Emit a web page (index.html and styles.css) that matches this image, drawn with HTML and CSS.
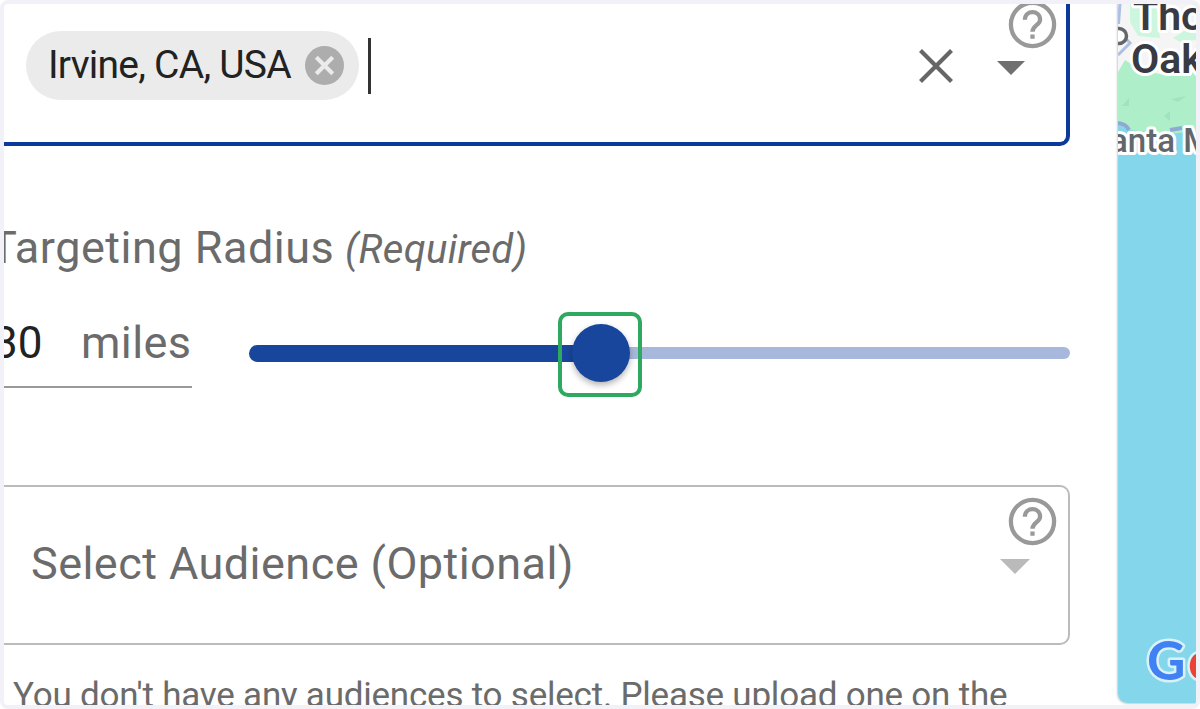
FILE: index.html
```html
<!DOCTYPE html>
<html lang="en">
<head>
    <meta charset="UTF-8">
    <meta name="viewport" content="width=device-width, initial-scale=1.0">
    <title>Targeting Radius</title>
    <link rel="stylesheet" href="styles.css">
</head>
<body>

    <div class="frame">
        <div class="form">
            <!-- Location -->
            <div class="field location-field">
                <div class="chip">
                    <span class="chip-label">Irvine, CA, USA</span>
                    <svg class="chip-remove" viewBox="0 0 38 38">
                        <circle cx="19" cy="19" r="19" fill="#adadad"/>
                        <path d="M11 11L27 27M27 11L11 27" stroke="#ebebeb" stroke-width="4"/>
                    </svg>
                </div>
                <span class="cursor"></span>
                <svg class="clear-icon" viewBox="0 0 34 34">
                    <path d="M1.5 1.5L32.5 32.5M32.5 1.5L1.5 32.5" stroke="#666" stroke-width="4.2"/>
                </svg>
                <svg class="caret" viewBox="0 0 28 14"><path d="M0 0H28L14 14Z" fill="#707070"/></svg>
                <svg class="help-icon" viewBox="0 0 24 24">
                    <circle cx="12" cy="12" r="9.100"/>
                    <path d="M8.800 10C8.800 5.700 15.200 5.700 15.200 10C15.200 12.200 12 12.400 12 15M12 16.200V18"/>
                </svg>
            </div>

            <!-- Radius -->
            <div class="radius-title"><span class="radius-name">Targeting Radius</span> <i>(Required)</i></div>
            <div class="radius-row">
                <div class="radius-input">
                    <span class="radius-value">30</span>
                    <span class="radius-unit">miles</span>
                </div>
                <div class="slider">
                    <div class="slider-active"></div>
                    <div class="slider-rest"></div>
                    <div class="thumb"></div>
                    <div class="highlight"></div>
                </div>
            </div>

            <!-- Audience -->
            <div class="field audience-field">
                <span class="placeholder">Select Audience (Optional)</span>
                <svg class="caret caret-light" viewBox="0 0 28 14"><path d="M0 0H28L14 14Z" fill="#bababa"/></svg>
                <svg class="help-icon" viewBox="0 0 24 24">
                    <circle cx="12" cy="12" r="9.100"/>
                    <path d="M8.800 10C8.800 5.700 15.200 5.700 15.200 10C15.200 12.200 12 12.400 12 15M12 16.200V18"/>
                </svg>
            </div>
            <p class="hint">You don't have any audiences to select. Please upload one on the</p>
        </div>

        <!-- Map -->
        <svg class="map" viewBox="1118 4 78 699">
            <rect x="1118" y="4" width="78" height="699" fill="#84d6eb"/>
            <path d="M1118 4H1196V131L1170 134L1128 130L1118 124Z" fill="#aeefca"/>
            <path d="M1118 4H1196V72L1170 76L1140 70L1125 60L1118 72Z" fill="#f5f5f6"/>
            <path d="M1130 4H1156L1160 38L1138 36L1130 22ZM1173 38L1184 31H1196V40L1180 42Z" fill="#cdf6df"/>
            <path d="M1120 4L1118.500 24M1118 55L1130 43L1126 39" fill="none" stroke="#adbfe2" stroke-width="3"/>
            <path d="M1118 123Q1126 124 1129 130M1170 130L1182 128" fill="none" stroke="#8fa9d3" stroke-width="4"/>
            <path d="M1122 106L1129 98V106ZM1171 99L1186 96L1178 102ZM1164 116L1170 111V121Z" fill="#a2e2be"/>
            <circle cx="1119" cy="36" r="7.500" fill="#fff" stroke="#66676b" stroke-width="3.500"/>
            <g class="map-label">
                <text class="city" x="1133" y="29.500">Tho</text>
                <text class="city" x="1131" y="73">Oaks</text>
                <text class="park" x="1110" y="152">anta M</text>
            </g>
            <g class="map-logo">
                <text x="1147" y="680" fill="#4081f3">G</text>
                <text x="1188" y="680" fill="#ea4335">o</text>
            </g>
        </svg>
    </div>

</body>
</html>
```
FILE: styles.css
```css
body {
    margin: 0;
    background-color: #fff;
    font-family: Roboto, Arial, sans-serif;
    color: #6b6b6b;
}

.frame {
    display: flex;
    justify-content: space-between;
    box-sizing: border-box;
    width: 1200px;
    height: 709px;
    border: 4px solid #f2f1f7;
    border-radius: 8px;
    overflow: hidden;
    white-space: nowrap;
}

.form {
    width: 1066px;
}

.field {
    position: relative;
    display: flex;
    box-sizing: border-box;
}

/* Location field */
.location-field {
    height: 142px;
    padding: 27px 41px 0 22px;
    border: solid #0b3a9b;
    border-width: 0 4px 4px 0;
    border-radius: 0 0 10px 0;
}

.chip {
    display: flex;
    align-items: center;
    justify-content: space-between;
    box-sizing: border-box;
    width: 333px;
    height: 69px;
    padding: 0 15px 0 22px;
    border-radius: 35px;
    background-color: #ebebeb;
}

.chip-label {
    font-size: 39px;
    letter-spacing: -0.75px;
    line-height: 69px;
    color: #222;
}

.chip-remove {
    width: 39px;
    height: 39px;
}

.cursor {
    width: 3px;
    height: 56px;
    margin: 7px 0 0 9px;
    background-color: #333;
}

.clear-icon {
    width: 34px;
    height: 34px;
    margin: 18px 0 0 auto;
}

.caret {
    width: 28px;
    height: 14px;
    margin: 30px 0 0 44px;
}

/* Help icons sit over the corner of the field */
.help-icon {
    position: absolute;
    top: -8px;
    right: 5px;
    width: 57px;
    height: 57px;
    fill: none;
    stroke: #999;
    stroke-width: 1.8;
}

/* Radius */
.radius-title {
    margin: 76px 0 0 -14px;
    font-size: 45px;
    letter-spacing: 0.5px;
    line-height: 52px;
}

.radius-title i {
    font-size: 40px;
    letter-spacing: 0.3px;
    margin-left: -1px;
}

.radius-row {
    display: flex;
    margin-top: 32px;
    height: 80px;
}

.radius-input {
    display: flex;
    box-sizing: border-box;
    width: 188px;
    height: 80px;
    border-bottom: 2px solid #999;
    font-size: 44px;
    line-height: 70px;
}

.radius-value {
    width: 76px;
    margin-left: -11px;
    color: #222;
}

.radius-unit {
    margin-left: 12px;
    font-size: 45px;
    letter-spacing: 0.4px;
}

.slider {
    position: relative;
    display: flex;
    align-items: center;
    width: 821px;
    height: 84px;
    margin: 3px 0 0 57px;
}

.slider-active {
    width: 352px;
    height: 17px;
    border-radius: 9px 0 0 9px;
    background-color: #18469d;
}

.slider-rest {
    flex: 1;
    height: 12px;
    border-radius: 0 6px 6px 0;
    background-color: #a8b8dc;
}

.thumb {
    position: absolute;
    left: 323px;
    top: 13px;
    width: 58px;
    height: 58px;
    border-radius: 50%;
    background-color: #18469d;
    box-shadow: 0 3px 6px rgba(0, 0, 0, 0.3);
}

.highlight {
    position: absolute;
    left: 309px;
    top: 1px;
    box-sizing: border-box;
    width: 84px;
    height: 85px;
    border: 4px solid #2fa860;
    border-radius: 10px;
}

/* Audience */
.audience-field {
    height: 160px;
    margin-top: 97px;
    padding: 0 38px 0 27px;
    border: 2px solid #bbb;
    border-left: 0;
    border-radius: 0 10px 10px 0;
}

.placeholder {
    font-size: 45px;
    letter-spacing: 0.45px;
    line-height: 154px;
}

.audience-field .help-icon {
    top: 6px;
    right: 7px;
}

.caret-light {
    width: 30px;
    height: 15px;
    margin: 72px 0 0 auto;
}

.hint {
    margin: 29px 0 0 9px;
    font-size: 35px;
    letter-spacing: -0.22px;
    line-height: 44px;
}

/* Map */
.map {
    width: 78px;
    height: 699px;
    border-radius: 0 0 0 9px;
    box-shadow: 0 0 2px 1px #ccc;
}

.map-label text {
    paint-order: stroke;
    stroke: #fff;
    stroke-width: 6px;
    stroke-linejoin: round;
}

.city {
    font-size: 41px;
    font-weight: 600;
    fill: #393b43;
}

.park {
    font-size: 33px;
    font-weight: 500;
    fill: #62666d;
}

.map-logo text {
    font-family: Lato, sans-serif;
    font-size: 53px;
    font-weight: 700;
    paint-order: stroke;
    stroke: #d9f2f8;
    stroke-width: 5px;
    stroke-linejoin: round;
}
```
